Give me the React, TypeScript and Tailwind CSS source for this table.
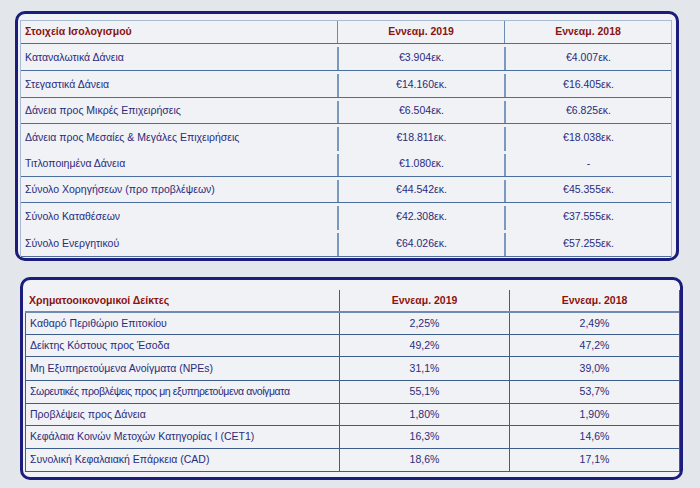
import React from "react";

type Row = { label: string; a: string; b: string; h: number; line?: boolean; tight?: boolean };

const t1: Row[] = [
  { label: "Καταναλωτικά Δάνεια", a: "€3.904εκ.", b: "€4.007εκ.", h: 27, line: true },
  { label: "Στεγαστικά Δάνεια", a: "€14.160εκ.", b: "€16.405εκ.", h: 27, line: true },
  { label: "Δάνεια προς Μικρές Επιχειρήσεις", a: "€6.504εκ.", b: "€6.825εκ.", h: 26, line: true },
  { label: "Δάνεια προς Μεσαίες & Μεγάλες Επιχειρήσεις", a: "€18.811εκ.", b: "€18.038εκ.", h: 27, line: false },
  { label: "Τιτλοποιημένα Δάνεια", a: "€1.080εκ.", b: "-", h: 26, line: true },
  { label: "Σύνολο Χορηγήσεων (προ προβλέψεων)", a: "€44.542εκ.", b: "€45.355εκ.", h: 26, line: true },
  { label: "Σύνολο Καταθέσεων", a: "€42.308εκ.", b: "€37.555εκ.", h: 27, line: false },
  { label: "Σύνολο Ενεργητικού", a: "€64.026εκ.", b: "€57.255εκ.", h: 27, line: true },
];

const t2: Row[] = [
  { label: "Καθαρό Περιθώριο Επιτοκίου", a: "2,25%", b: "2,49%", h: 22, line: true },
  { label: "Δείκτης Κόστους προς Έσοδα", a: "49,2%", b: "47,2%", h: 22, line: true },
  { label: "Μη Εξυπηρετούμενα Ανοίγματα (NPEs)", a: "31,1%", b: "39,0%", h: 24, line: true },
  { label: "Σωρευτικές προβλέψεις προς μη εξυπηρετούμενα ανοίγματα", a: "55,1%", b: "53,7%", h: 23, line: true, tight: true },
  { label: "Προβλέψεις προς Δάνεια", a: "1,80%", b: "1,90%", h: 22, line: true },
  { label: "Κεφάλαια Κοινών Μετοχών Κατηγορίας I (CET1)", a: "16,3%", b: "14,6%", h: 23, line: true },
  { label: "Συνολική Κεφαλαιακή Επάρκεια (CAD)", a: "18,6%", b: "17,1%", h: 23, line: true },
];

const font = { fontFamily: '"Liberation Sans", Arial, sans-serif' };

export default function App() {
  return (
    <div
      className="w-[700px] h-[488px] bg-[#e3e6ea] relative overflow-hidden text-[10.5px] text-[#2a2b7c]"
      style={font}
    >
      <div className="pt-[11px] pl-[15px]">
        {/* Panel 1 */}
        <div className="w-[664px] h-[250px] border-[3px] border-[#1c1c7c] rounded-[10px] bg-[#f0f2f5] pt-[6px] pl-[2px]">
          <div className="w-[652px] border-t border-l border-r border-[#a9bbd3]">
            <div className="flex h-[23px] border-b border-[#4d6f9f]">
              <div className="w-[316px] flex items-center pl-[4px] font-bold text-[#8a1212]">Στοιχεία Ισολογισμού</div>
              <div className="w-[167px] flex items-center justify-center font-bold text-[#8a1212] border-l border-[#6b8bb5]">Εννεαμ. 2019</div>
              <div className="flex-1 flex items-center justify-center font-bold text-[#8a1212] border-l border-[#6b8bb5]">Εννεαμ. 2018</div>
            </div>
            {t1.map((r, i) => (
              <div
                key={i}
                className={"flex pt-[3px] " + (r.line ? "border-b border-[#4d6f9f]" : "")}
                style={{ height: r.h }}
              >
                <div className="w-[316px] flex items-center pl-[4px] pb-[2px]">{r.label}</div>
                <div className="w-[167px] flex items-center justify-center border-l-2 border-[#7b98bf] pb-[2px]">{r.a}</div>
                <div className="flex-1 flex items-center justify-center border-l-2 border-[#7b98bf] pb-[2px]">{r.b}</div>
              </div>
            ))}
          </div>
        </div>
      </div>

      <div className="pt-[16px] pl-[20px]">
        {/* Panel 2 */}
        <div className="w-[663px] h-[203px] border-[3px] border-[#1c1c7c] rounded-[10px] bg-[#f0f2f5] pt-[10px] pl-[2px]">
          <div className="w-[655px] border-r border-[#3d5d8d]">
            <div className="flex h-[23px] border-b-2 border-[#6d8bb3]">
              <div className="w-[314px] flex items-center pl-[4px] font-bold text-[#8a1212]">Χρηματοοικονομικοί Δείκτες</div>
              <div className="w-[170px] flex items-center justify-center font-bold text-[#8a1212] border-l border-[#3d5d8d]">Εννεαμ. 2019</div>
              <div className="flex-1 flex items-center justify-center font-bold text-[#8a1212] border-l border-[#3d5d8d]">Εννεαμ. 2018</div>
            </div>
            {t2.map((r, i) => (
              <div key={i} className="flex border-b border-[#3d5d8d]" style={{ height: r.h }}>
                <div
                  className={
                    "w-[314px] flex items-center pl-[4px] border-l border-[#3d5d8d] whitespace-nowrap " +
                    (r.tight ? "tracking-[-0.4px]" : "")
                  }
                >
                  {r.label}
                </div>
                <div className="w-[170px] flex items-center justify-center border-l border-[#3d5d8d]">{r.a}</div>
                <div className="flex-1 flex items-center justify-center border-l border-[#3d5d8d]">{r.b}</div>
              </div>
            ))}
          </div>
        </div>
      </div>
    </div>
  );
}
